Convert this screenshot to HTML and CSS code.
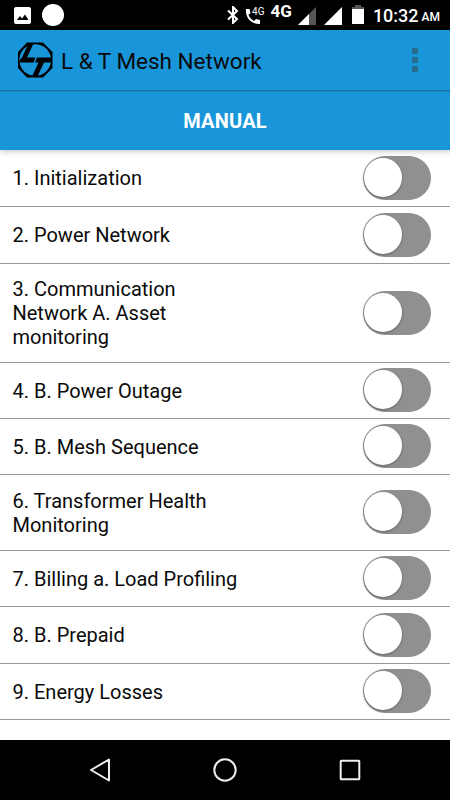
FILE: index.html
```html
<!DOCTYPE html>
<html lang="en">
<head>
    <meta charset="UTF-8">
    <meta name="viewport" content="width=device-width, initial-scale=1.0">
    <title>L &amp; T Mesh Network</title>
    <link rel="stylesheet" href="styles.css">
</head>
<body>
    <!-- Status bar -->
    <div class="status-bar">
        <div class="status-left">
            <svg width="17" height="17" viewBox="0 0 17 17">
                <rect width="17" height="17" rx="2" fill="#fff"/>
                <path d="M3 13l3-4 2 2.500 3-4 3.500 5.500z" fill="#000"/>
            </svg>
            <span class="dot"></span>
        </div>
        <div class="status-right">
            <svg class="bluetooth" width="12" height="18" viewBox="0 0 12 18">
                <path d="M1 4.500l9 8.500-4 4V1l4 4-9 8.500" fill="none" stroke="#fff" stroke-width="2"/>
            </svg>
            <svg class="call" width="16" height="17" viewBox="0 0 16 17">
                <path d="M1 1h3.500l1 4-2 2c1 2.500 3 4.700 5.500 6l2-2 4 1V16C7 16.500 0 10 1 1z" fill="#fff"/>
            </svg>
            <span class="call-type">4G</span>
            <span class="data-type">4G</span>
            <svg class="signal" width="18" height="18" viewBox="0 0 18 18">
                <path d="M0 18L18 0v18z" fill="#555"/>
                <path d="M0 18L11 7v11z" fill="#fff"/>
            </svg>
            <svg class="signal-full" width="18" height="18" viewBox="0 0 18 18">
                <path d="M0 18L18 0v18z" fill="#fff"/>
            </svg>
            <svg class="battery" width="12" height="19" viewBox="0 0 12 19">
                <path d="M3 0h6v2h3v3H0V2h3z" fill="#555"/>
                <path d="M0 4h12v15H0z" fill="#fff"/>
            </svg>
            <span class="clock">10:32</span>
            <span class="ampm">AM</span>
        </div>
    </div>

    <!-- App bar -->
    <header class="app-bar">
        <svg class="logo" width="36" height="36" viewBox="0 0 36 36">
            <path d="M10 .500h16L35.500 10v16L26 35.500H10L1 26V10z" fill="#000"/>
            <circle cx="18.200" cy="18" r="15.800" fill="#1996d9"/>
            <path d="M11.500 1.500h5L10 15.500H18.500L16.500 20.500H2.500v-2.500L5 15.500zM20 15.500h15v3l-2 2h-6L20.500 34.500H15L21.500 20.500h-3.500z" fill="#000"/>
        </svg>
        <h1>L &amp; T Mesh Network</h1>
        <div class="overflow">
            <i></i>
            <i></i>
            <i></i>
        </div>
    </header>

    <button class="manual">MANUAL</button>

    <!-- Test list -->
    <ul class="list">
        <li><span>1. Initialization</span><div class="switch"></div></li>
        <li><span>2. Power Network</span><div class="switch"></div></li>
        <li><span>3. Communication Network A. Asset monitoring</span><div class="switch"></div></li>
        <li><span>4. B. Power Outage</span><div class="switch"></div></li>
        <li><span>5. B. Mesh Sequence</span><div class="switch"></div></li>
        <li><span>6. Transformer Health Monitoring</span><div class="switch"></div></li>
        <li><span>7. Billing a. Load Profiling</span><div class="switch"></div></li>
        <li><span>8. B. Prepaid</span><div class="switch"></div></li>
        <li><span>9. Energy Losses</span><div class="switch"></div></li>
    </ul>

    <!-- Navigation bar -->
    <nav class="nav-bar">
        <svg width="24" height="24" viewBox="0 0 24 24">
            <path d="M21 1.500v21L3 12z"/>
        </svg>
        <svg width="24" height="24" viewBox="0 0 24 24">
            <circle cx="12" cy="12" r="10.700"/>
        </svg>
        <svg width="24" height="24" viewBox="0 0 24 24">
            <rect x="2.700" y="2.700" width="18.600" height="18.600" rx="0.500"/>
        </svg>
    </nav>
</body>
</html>
```

FILE: styles.css
```css
* {
    margin: 0;
    padding: 0;
    box-sizing: border-box;
}

body {
    font-family: Roboto, "Liberation Sans", sans-serif;
    width: 450px;
    height: 800px;
    display: flex;
    flex-direction: column;
    overflow: hidden;
    background: #fff;
    color: #0a0a0a;
}

svg {
    display: block;
    flex: none;
}

/* Status bar */
.status-bar {
    height: 30px;
    background: #000;
    color: #fff;
    display: flex;
    justify-content: space-between;
    padding: 0 10px 0 14px;
}

.status-left {
    display: flex;
    align-items: center;
    gap: 11px;
}

.dot {
    width: 22px;
    height: 22px;
    border-radius: 50%;
    background: #fff;
}

.status-right {
    display: flex;
    align-items: flex-start;
}

.bluetooth {
    margin: 6px 6px 0 0;
}

.call {
    margin-top: 8px;
}

.call-type {
    font-size: 10px;
    line-height: 12px;
    margin: 6px 0 0 -9px;
}

.data-type {
    font-size: 17px;
    font-weight: bold;
    line-height: 18px;
    margin: 2px 6px 0 6px;
}

.signal,
.signal-full {
    margin-top: 7px;
}

.signal-full {
    margin-left: 8px;
}

.battery {
    margin: 5px 9px 0 10px;
}

.clock {
    font-size: 18px;
    font-weight: 500;
    line-height: 22px;
    margin-top: 5px;
}

.ampm {
    font-size: 12px;
    font-weight: 500;
    line-height: 16px;
    margin: 9px 0 0 3px;
}

/* App bar */
.app-bar {
    height: 60px;
    background: #1996d9;
    display: flex;
    align-items: center;
    padding: 0 32px 0 17px;
    position: relative;
    z-index: 2;
    box-shadow: 0 1px 2px rgba(0, 0, 0, 0.35);
}

.app-bar h1 {
    font-size: 22.5px;
    font-weight: 400;
    line-height: 28px;
    margin: 1px 0 0 8px;
}

.overflow {
    margin-left: auto;
    display: grid;
    gap: 3px;
}

.overflow i {
    width: 6px;
    height: 6px;
    background: #2a6d93;
}

.manual {
    height: 60px;
    flex: none;
    border: none;
    background: #1996d9;
    color: #fff;
    font: bold 20px/24px Roboto, "Liberation Sans", sans-serif;
    padding-top: 1px;
    letter-spacing: 0.2px;
    position: relative;
    z-index: 1;
    box-shadow: 0 1px 6px rgba(0, 0, 0, 0.25);
}

/* Test list */
.list {
    list-style: none;
    flex: 1;
    display: grid;
    grid-template-rows: 57px 57px 99px 56px 56px 76px 56px 57px 56px;
}

.list li {
    display: flex;
    align-items: center;
    justify-content: space-between;
    padding: 0 19px 0 12.5px;
    border-bottom: 1px solid #999;
}

.list span {
    width: 228px;
    font-size: 20px;
    line-height: 24px;
}

.switch {
    width: 68.5px;
    height: 44px;
    margin-top: -1px;
    padding: 2px 1px;
    border-radius: 22px;
    background: #909090;
}

.switch::before {
    content: "";
    display: block;
    width: 38px;
    height: 39px;
    border-radius: 50%;
    background: #fff;
    box-shadow: 0 1px 3px rgba(0, 0, 0, 0.3);
}

/* Navigation bar */
.nav-bar {
    height: 60px;
    flex: none;
    background: #000;
    display: flex;
    align-items: center;
    justify-content: space-between;
    padding: 0 88px;
}

.nav-bar svg {
    fill: none;
    stroke: #eee;
    stroke-width: 2;
    stroke-linejoin: round;
}
```
